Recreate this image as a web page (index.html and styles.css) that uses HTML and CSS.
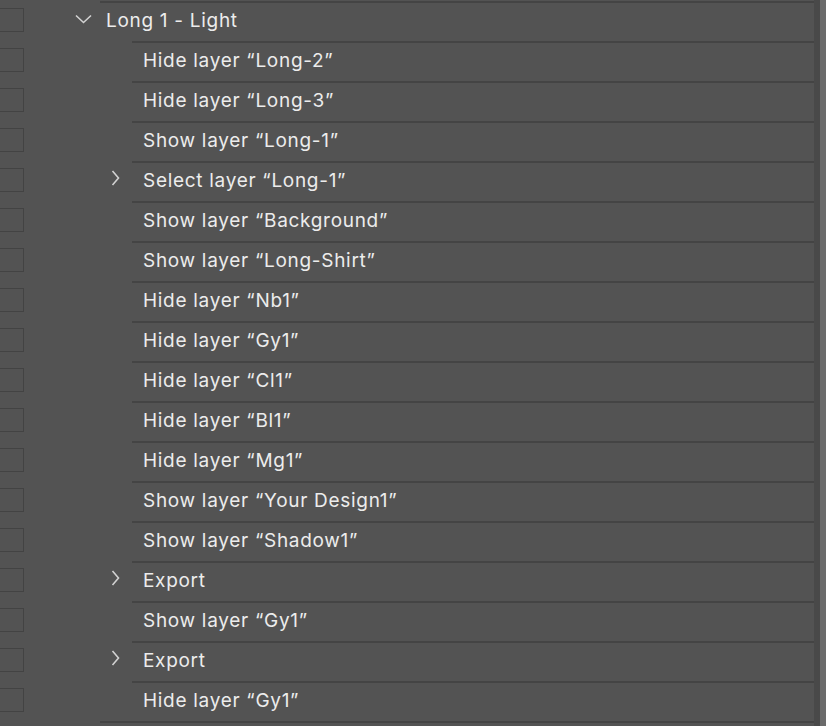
FILE: index.html
```html
<!DOCTYPE html>
<html lang="en">
<head>
<meta charset="utf-8">
<title>Actions</title>
<link rel="stylesheet" href="styles.css">
</head>
<body>
<div class="panel">
  <div class="list">
    <div class="row header">
      <span class="check"></span>
      <span class="twist twist-open"><svg width="18" height="10" viewBox="0 0 18 10"><polyline points="1,1.5 8.5,8.5 16,1.5" fill="none" stroke="#d2d2d2" stroke-width="1.6"/></svg></span>
      <div class="line">Long 1 - Light</div>
    </div>
    <div class="row child"><span class="check"></span><span class="twist"></span><div class="line">Hide layer “Long-2”</div></div>
    <div class="row child"><span class="check"></span><span class="twist"></span><div class="line">Hide layer “Long-3”</div></div>
    <div class="row child"><span class="check"></span><span class="twist"></span><div class="line">Show layer “Long-1”</div></div>
    <div class="row child"><span class="check"></span><span class="twist twist-closed"><svg width="9" height="16" viewBox="0 0 9 16"><polyline points="1.5,1 7.5,8 1.5,15" fill="none" stroke="#d2d2d2" stroke-width="1.6"/></svg></span><div class="line">Select layer “Long-1”</div></div>
    <div class="row child"><span class="check"></span><span class="twist"></span><div class="line">Show layer “Background”</div></div>
    <div class="row child"><span class="check"></span><span class="twist"></span><div class="line">Show layer “Long-Shirt”</div></div>
    <div class="row child"><span class="check"></span><span class="twist"></span><div class="line">Hide layer “Nb1”</div></div>
    <div class="row child"><span class="check"></span><span class="twist"></span><div class="line">Hide layer “Gy1”</div></div>
    <div class="row child"><span class="check"></span><span class="twist"></span><div class="line">Hide layer “Cl1”</div></div>
    <div class="row child"><span class="check"></span><span class="twist"></span><div class="line">Hide layer “Bl1”</div></div>
    <div class="row child"><span class="check"></span><span class="twist"></span><div class="line">Hide layer “Mg1”</div></div>
    <div class="row child"><span class="check"></span><span class="twist"></span><div class="line">Show layer “Your Design1”</div></div>
    <div class="row child"><span class="check"></span><span class="twist"></span><div class="line">Show layer “Shadow1”</div></div>
    <div class="row child"><span class="check"></span><span class="twist twist-closed"><svg width="9" height="16" viewBox="0 0 9 16"><polyline points="1.5,1 7.5,8 1.5,15" fill="none" stroke="#d2d2d2" stroke-width="1.6"/></svg></span><div class="line">Export</div></div>
    <div class="row child"><span class="check"></span><span class="twist"></span><div class="line">Show layer “Gy1”</div></div>
    <div class="row child"><span class="check"></span><span class="twist twist-closed"><svg width="9" height="16" viewBox="0 0 9 16"><polyline points="1.5,1 7.5,8 1.5,15" fill="none" stroke="#d2d2d2" stroke-width="1.6"/></svg></span><div class="line">Export</div></div>
    <div class="row child"><span class="check"></span><span class="twist"></span><div class="line">Hide layer “Gy1”</div></div>
    <div class="group-end"></div>
  </div>
  <div class="gutter"></div>
  <div class="thumb"></div>
</div>
</body>
</html>
```

FILE: styles.css
```css
html, body {
  margin: 0;
  padding: 0;
  height: 100%;
  background: #535353;
  overflow: hidden;
}

.panel {
  display: flex;
  height: 100vh;
}

.list {
  flex: 1;
  padding-top: 1px;
  font-family: "Inter", "Liberation Sans", sans-serif;
  font-size: 19px;
  letter-spacing: 0.7px;
  color: #ececec;
}

.row {
  display: flex;
  height: 40px;
}

.check {
  flex: none;
  box-sizing: border-box;
  width: 25px;
  height: 24px;
  margin-left: -1px;
  margin-top: 7px;
  border: 1px solid #434343;
}

.twist {
  flex: none;
  box-sizing: border-box;
}

.header .twist {
  width: 76px;
  padding-left: 51px;
  padding-top: 13px;
}

.child .twist {
  width: 108px;
  padding-left: 87px;
  padding-top: 9px;
}

.twist svg {
  display: block;
}

.line {
  flex: 1;
  display: flex;
  align-items: center;
  box-sizing: border-box;
  padding-bottom: 4px;
  border-top: 2px solid #444444;
  white-space: nowrap;
}

.header .line {
  padding-left: 6px;
}

.child .line {
  padding-left: 11px;
}

.group-end {
  margin-left: 100px;
  height: 2px;
  background: #444444;
}

.gutter {
  flex: none;
  width: 6px;
  background: #494949;
}

.thumb {
  flex: none;
  width: 6px;
  background: #6b6b6b;
}
```
